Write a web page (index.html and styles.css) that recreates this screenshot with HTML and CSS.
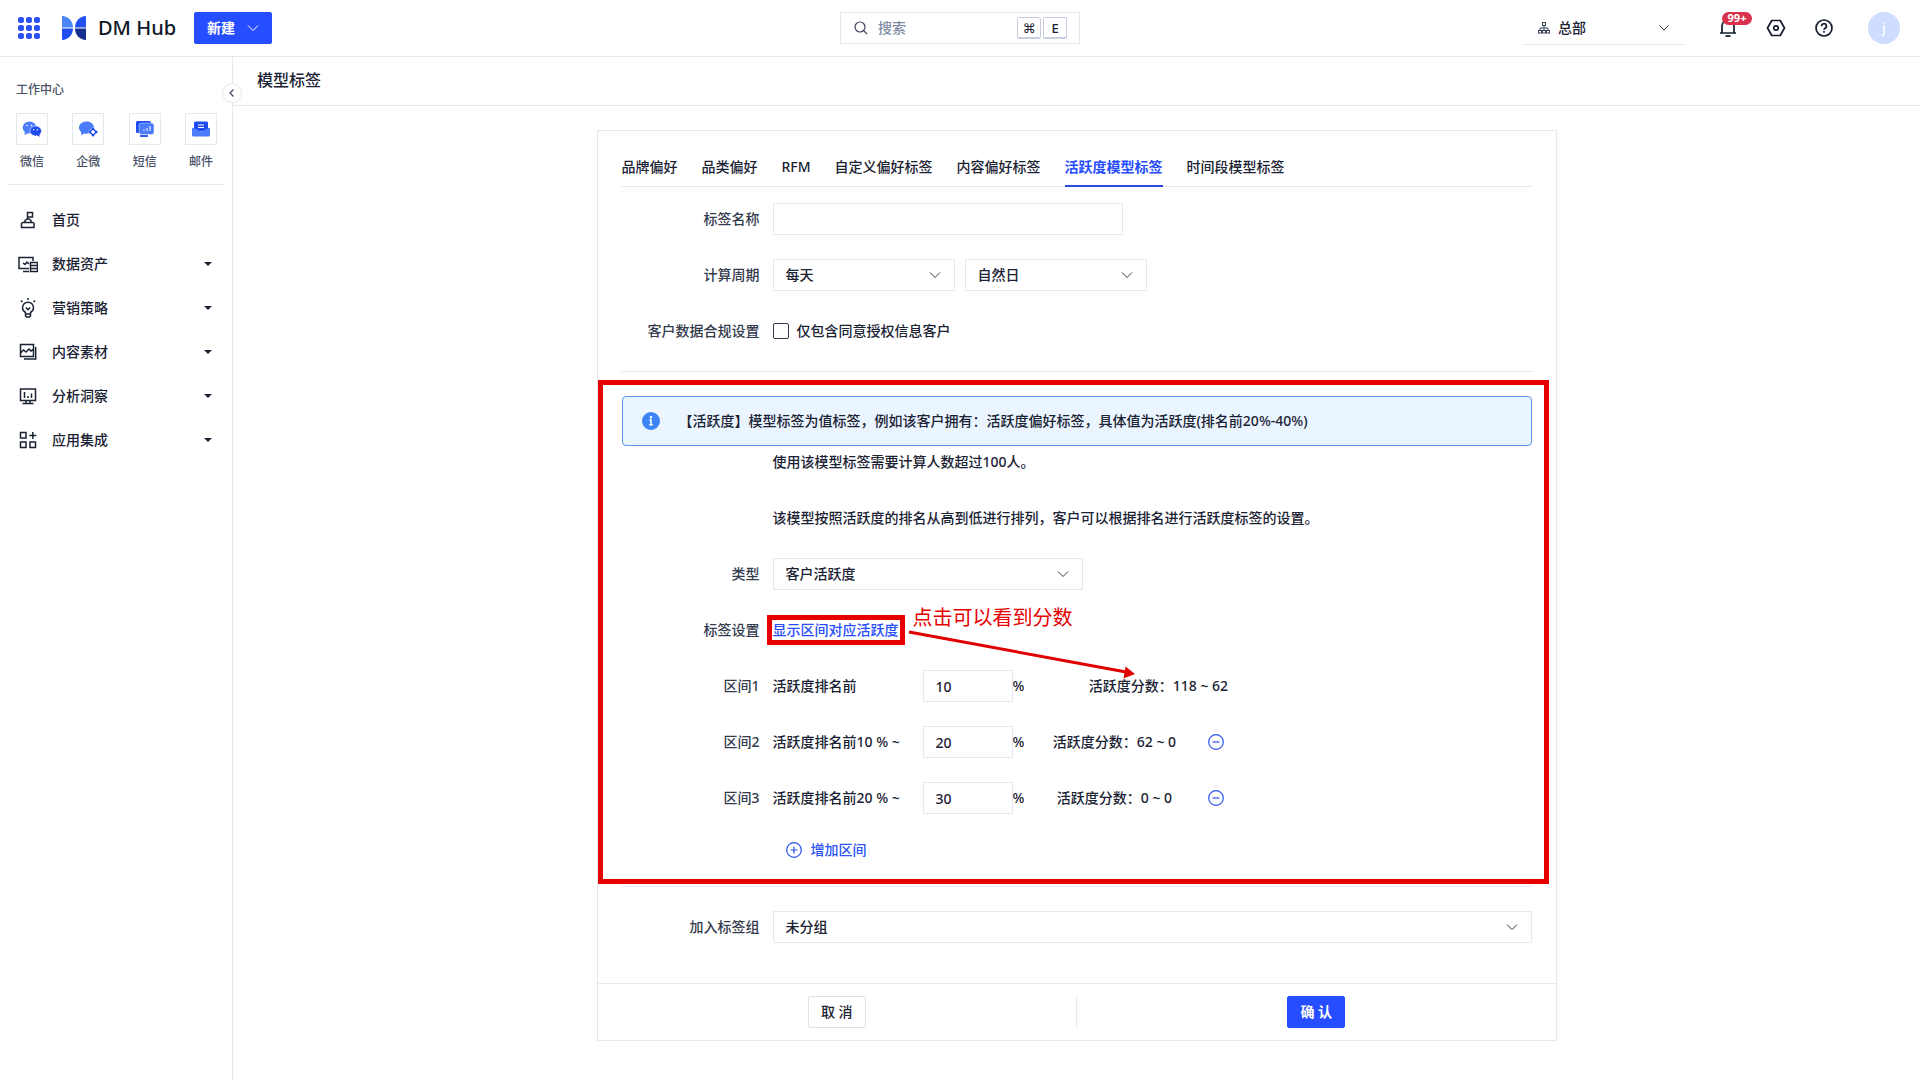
FILE: index.html
```html
<!DOCTYPE html>
<html lang="zh-CN">
<head>
<meta charset="utf-8">
<meta name="viewport" content="width=device-width, initial-scale=1">
<title>模型标签 - DM Hub</title>
<link rel="stylesheet" href="styles.css">
</head>
<body>
<header class="topbar">
  <div class="topbar-left">
    <button class="icon-button" type="button" aria-label="应用">
      <svg width="24" height="24" viewBox="0 0 24 24" fill="#2a52f5"><rect x="1" y="1" width="6" height="6" rx="2"/><rect x="9" y="1" width="6" height="6" rx="2"/><rect x="17" y="1" width="6" height="6" rx="2"/><rect x="1" y="9" width="6" height="6" rx="2"/><rect x="9" y="9" width="6" height="6" rx="2"/><rect x="17" y="9" width="6" height="6" rx="2"/><rect x="1" y="17" width="6" height="6" rx="2"/><rect x="9" y="17" width="6" height="6" rx="2"/><rect x="17" y="17" width="6" height="6" rx="2"/></svg>
    </button>
    <a class="brand" href="#">
      <svg width="26" height="26" viewBox="0 0 26 26"><path d="M1 1c6 0 11 5 11 11.500H1z" fill="#4a86f7"/><path d="M25 1c-6 0-11 5-11 11.500h11z" fill="#2450f0"/><path d="M1 13.500h11C12 20 7 25 1 25z" fill="#1f4df0"/><path d="M25 13.500H14C14 20 19 25 25 25z" fill="#152f8f"/></svg>
      <span>DM Hub</span>
    </a>
    <button class="btn btn-primary btn-new" type="button">新建
      <svg width="12" height="12" viewBox="0 0 12 12" fill="none" stroke="currentColor"><path d="M1 3.500l5 5 5-5"/></svg>
    </button>
  </div>
  <label class="search">
    <svg width="14" height="14" viewBox="0 0 14 14" fill="none" stroke="#3c4458" stroke-width="1.200"><circle cx="6" cy="6" r="5"/><path d="M9.700 9.700L13 13"/></svg>
    <input type="search" placeholder="搜索" aria-label="搜索">
    <kbd>⌘</kbd><kbd>E</kbd>
  </label>
  <div class="topbar-right">
    <div class="org">
      <svg width="12" height="12" viewBox="0 0 12 12" fill="none" stroke="#3c4458"><rect x="4.500" y=".5" width="3" height="3"/><path d="M6 3.500v5M2 8.500V6h8v2.500"/><rect x=".5" y="8.500" width="3" height="2.500"/><rect x="4.500" y="8.500" width="3" height="2.500"/><rect x="8.500" y="8.500" width="3" height="2.500"/></svg>
      <select aria-label="组织"><option>总部</option></select>
      <svg class="chevron" width="12" height="12" viewBox="0 0 12 12" fill="none" stroke="#333b4d"><path d="M1.500 3.500L6 8l4.500-4.500"/></svg>
    </div>
    <div class="tools">
      <button class="icon-button bell" type="button" aria-label="通知">
        <svg width="20" height="20" viewBox="0 0 20 20" fill="none" stroke="#141c2e" stroke-width="1.700"><path d="M4 15V8a6 6 0 0 1 12 0v7M2 15h16M7.500 18.200h5"/></svg>
        <span class="badge">99+</span>
      </button>
      <button class="icon-button" type="button" aria-label="设置">
        <svg width="20" height="20" viewBox="0 0 20 20" fill="none" stroke="#141c2e" stroke-width="1.700" stroke-linejoin="round"><path d="M5.800 2.500h8.400L18.500 10l-4.300 7.500H5.800L1.500 10z"/><circle cx="10" cy="10" r="2.200"/></svg>
      </button>
      <button class="icon-button" type="button" aria-label="帮助">
        <svg width="20" height="20" viewBox="0 0 20 20" fill="none" stroke="#141c2e" stroke-width="1.700"><circle cx="10" cy="10" r="8"/><path d="M7.600 8.200a2.400 2.400 0 1 1 3.600 2c-.9.500-1.200.8-1.200 1.600"/><path d="M10 13v1.700"/></svg>
      </button>
    </div>
    <span class="avatar">j</span>
  </div>
</header>

<div class="layout">
  <aside class="sidebar">
    <button class="collapse" type="button" aria-label="收起">
      <svg width="8" height="10" viewBox="0 0 8 10" fill="none" stroke="#4a5268" stroke-width="1.400"><path d="M5.500 1.500L2 5l3.500 3.500"/></svg>
    </button>
    <h2 class="work-title">工作中心</h2>
    <div class="work-list">
      <a class="work" href="#"><span class="work-icon"><svg width="20" height="18" viewBox="0 0 20 18"><ellipse cx="7.500" cy="7.500" rx="6.800" ry="6" fill="#4a7bfa"/><path d="M3 11l-.5 4 4-2z" fill="#4a7bfa"/><circle cx="5" cy="5.500" r=".8" fill="#fff"/><circle cx="9.500" cy="5.500" r=".8" fill="#fff"/><ellipse cx="13.700" cy="11" rx="5.800" ry="5" fill="#1f4af0" stroke="#fff" stroke-width=".6"/><path d="M15 15l2.500 2v-4z" fill="#1f4af0"/><circle cx="11.700" cy="9.700" r=".7" fill="#fff"/><circle cx="15.300" cy="9.700" r=".7" fill="#fff"/></svg></span>微信</a>
      <a class="work" href="#"><span class="work-icon"><svg width="20" height="18" viewBox="0 0 20 18"><path d="M8.500 1.500c4.300 0 7.500 2.700 7.500 6s-3.200 6.200-7.500 6.200c-.9 0-1.700-.1-2.500-.3L3 15.500l.3-3.300C1.800 11 1 9.400 1 7.500c0-3.300 3.200-6 7.500-6z" fill="#4a7bfa"/><path d="M15 7l5 5-5 5-5-5z" fill="#fff"/><path d="M15 8.700l3.300 3.300-3.300 3.300-3.300-3.300z" fill="none" stroke="#1f4af0" stroke-width="1.500"/><g fill="#1f4af0"><circle cx="15" cy="8.800" r="1.200"/><circle cx="15" cy="15.200" r="1.200"/><circle cx="11.800" cy="12" r="1.200"/><circle cx="18.300" cy="12" r="1.200"/></g></svg></span>企微</a>
      <a class="work" href="#"><span class="work-icon"><svg width="20" height="18" viewBox="0 0 20 18"><rect x="1" y="1" width="15" height="12" rx="1.500" fill="#1f4af0"/><rect x="4" y="3" width="15" height="11.500" rx="2.500" fill="#4a7bfa" stroke="#fff" stroke-width=".4"/><path d="M5 16h8" stroke="#1f4af0" stroke-width="1.800"/><path d="M9 11V9.500M12 11V8M15 11V6" stroke="#fff"/></svg></span>短信</a>
      <a class="work" href="#"><span class="work-icon"><svg width="20" height="18" viewBox="0 0 20 18"><path d="M3 3a1.500 1.500 0 0 1 1.500-1.500h11A1.500 1.500 0 0 1 17 3v8H3z" fill="#1f4af0"/><path d="M7 5h6M7 7.500h6" stroke="#fff" stroke-width="1.100"/><path d="M1 7.500l9 4 9-4V15a1.500 1.500 0 0 1-1.500 1.500h-15A1.500 1.500 0 0 1 1 15z" fill="#4a7bfa"/></svg></span>邮件</a>
    </div>
    <nav class="menu">
      <a href="#"><svg viewBox="0 0 20 20"><path d="M9.500 9V2.500h5v4.500h-5M7 12.500v-2l2-1.500h2l2 1.500v2M3.500 17.500v-4l1-1H15l1 1v4z"/></svg><span>首页</span></a>
      <a href="#"><svg viewBox="0 0 20 20"><path d="M11 14.500H1V3.500h14V7M5 17.500h6M5 9l2 1.500 2-2.500 2 2"/><path d="M12.500 8.500h7v9h-7zM12.500 11.500h7M12.500 14.500h7"/></svg><span>数据资产</span><i class="caret"></i></a>
      <a href="#"><svg viewBox="0 0 20 20"><path d="M7.500 14.500C5.800 13.500 4.500 12 4.500 9.700a5.500 5.500 0 0 1 11 0c0 2.300-1.300 3.800-3 4.800v3.500l-1 1h-3l-1-1zM7.500 16h5M7.800 9.500L10 11.700l2.200-2.200M10 0v2M3 2.500l1.500 1.500M17 2.500L15.500 4"/></svg><span>营销策略</span><i class="caret"></i></a>
      <a href="#"><svg viewBox="0 0 20 20"><path d="M2.500 2.500h13v12h-13zM2.500 11l3-3 2.500 2 3-3 2 2 2.500-1.500M17.700 5v12H6"/></svg><span>内容素材</span><i class="caret"></i></a>
      <a href="#"><svg viewBox="0 0 20 20"><path d="M2.500 3h15v11.500h-15zM4.500 17.500h11M8 14.500v3M12 14.500v3M6.500 6v6M10 10v2M13.500 7.500V12"/></svg><span>分析洞察</span><i class="caret"></i></a>
      <a href="#"><svg viewBox="0 0 20 20"><path d="M2.500 2.500h5.500v5.500H2.500zM2.500 12h5.500v5.500H2.500zM12 12h5.500v5.500H12zM14.800 2v7M11.300 5.500h7"/></svg><span>应用集成</span><i class="caret"></i></a>
    </nav>
  </aside>

  <main class="main">
    <h1 class="page-title">模型标签</h1>
    <form class="card">
      <div class="card-body">
        <nav class="tabs">
          <a href="#">品牌偏好</a><a href="#">品类偏好</a><a href="#">RFM</a><a href="#">自定义偏好标签</a><a href="#">内容偏好标签</a><a class="active" href="#">活跃度模型标签</a><a href="#">时间段模型标签</a>
        </nav>
        <div class="rows">
          <div class="row"><label class="label" for="name">标签名称</label><input class="field w-name" id="name" type="text"></div>
          <div class="row"><label class="label" for="cycle">计算周期</label>
            <div class="pair">
              <div class="select w-cycle"><select class="field" id="cycle"><option>每天</option></select><svg class="chevron" width="12" height="12" viewBox="0 0 12 12"><path d="M1 3.500l5 5 5-5"/></svg></div>
              <div class="select w-cycle"><select class="field" aria-label="日期类型"><option>自然日</option></select><svg class="chevron" width="12" height="12" viewBox="0 0 12 12"><path d="M1 3.500l5 5 5-5"/></svg></div>
            </div>
          </div>
          <div class="row"><span class="label">客户数据合规设置</span><label class="check"><input type="checkbox">仅包含同意授权信息客户</label></div>
        </div>
        <hr>
        <section class="model">
          <div class="alert">
            <svg width="18" height="18" viewBox="0 0 18 18"><circle cx="9" cy="9" r="9" fill="#3d84f7"/><circle cx="9" cy="5.300" r="1.200" fill="#fff"/><path d="M7.500 8H9v4.500M7.200 12.800h3.600" stroke="#fff" stroke-width="1.600" fill="none"/></svg>
            <p>【活跃度】模型标签为值标签，例如该客户拥有：活跃度偏好标签，具体值为活跃度(排名前20%-40%)</p>
          </div>
          <div class="rows">
            <div class="row"><p class="hint">使用该模型标签需要计算人数超过100人。</p></div>
            <div class="row"><p class="hint">该模型按照活跃度的排名从高到低进行排列，客户可以根据排名进行活跃度标签的设置。</p></div>
            <div class="row"><label class="label" for="type">类型</label><div class="select w-type"><select class="field" id="type"><option>客户活跃度</option></select><svg class="chevron" width="12" height="12" viewBox="0 0 12 12"><path d="M1 3.500l5 5 5-5"/></svg></div></div>
            <div class="row"><span class="label">标签设置</span>
              <div class="callout"><a class="show-score" href="#">显示区间对应活跃度</a>
                <span class="note">点击可以看到分数</span>
                <svg class="arrow" width="230" height="52" viewBox="0 0 230 52"><path d="M2 3L219 43" stroke="#e00000" stroke-width="3"/><path d="M228 45l-11.500 4.500 2-12z" fill="#e00000"/></svg>
              </div>
            </div>
            <div class="row"><span class="label">区间1</span><div class="range"><label for="r1">活跃度排名前</label><input class="field" id="r1" type="text" value="10"><span>%</span><span class="score score-wide">活跃度分数：118 ~ 62</span></div></div>
            <div class="row"><span class="label">区间2</span><div class="range"><label for="r2">活跃度排名前10 % ~</label><input class="field" id="r2" type="text" value="20"><span>%</span><span class="score">活跃度分数：62 ~ 0</span><button class="icon-button round" type="button" aria-label="删除区间2"><svg width="16" height="16" viewBox="0 0 16 16"><circle cx="8" cy="8" r="7.300"/><path d="M4.500 8h7"/></svg></button></div></div>
            <div class="row"><span class="label">区间3</span><div class="range"><label for="r3">活跃度排名前20 % ~</label><input class="field" id="r3" type="text" value="30"><span>%</span><span class="score">活跃度分数：0 ~ 0</span><button class="icon-button round" type="button" aria-label="删除区间3"><svg width="16" height="16" viewBox="0 0 16 16"><circle cx="8" cy="8" r="7.300"/><path d="M4.500 8h7"/></svg></button></div></div>
          </div>
          <button class="add round" type="button"><svg width="16" height="16" viewBox="0 0 16 16"><circle cx="8" cy="8" r="7.300"/><path d="M4.500 8h7M8 4.500v7"/></svg>增加区间</button>
        </section>
        <hr>
        <div class="row"><label class="label" for="group">加入标签组</label><div class="select"><select class="field" id="group"><option>未分组</option></select><svg class="chevron" width="12" height="12" viewBox="0 0 12 12"><path d="M1 3.500l5 5 5-5"/></svg></div></div>
      </div>
      <footer class="card-footer">
        <div><button class="btn" type="button">取 消</button></div>
        <div><button class="btn btn-primary" type="submit">确 认</button></div>
      </footer>
    </form>
  </main>
</div>
</body>
</html>
```
FILE: styles.css
```css
:root {
  --blue: #264dff;
  --line: #e6e8f0;
  --text: #1a2233;
  --red: #e60000;
}

* { box-sizing: border-box; }

body {
  margin: 0;
  min-height: 100vh;
  display: flex;
  flex-direction: column;
  background: #fff;
  color: var(--text);
  font: 500 14px/20px "Noto Sans", "Noto Sans CJK SC", sans-serif;
}

a { color: inherit; text-decoration: none; }
p, h1, h2 { margin: 0; }
button, input, select { font: inherit; color: inherit; }
svg { display: block; flex: none; }

.icon-button {
  display: block;
  padding: 0;
  border: 0;
  background: none;
}

.btn {
  height: 32px;
  padding: 0 12px;
  border: 1px solid #dfe2ec;
  border-radius: 2px;
  background: #fff;
}

.btn-primary {
  border-color: var(--blue);
  background: var(--blue);
  color: #fff;
  font-weight: 700;
}

/* Top bar */
.topbar {
  display: grid;
  grid-template-columns: 1fr 240px 1fr;
  align-items: center;
  height: 57px;
  border-bottom: 1px solid var(--line);
}

.topbar-left {
  display: flex;
  align-items: center;
  padding-left: 17px;
}

.brand {
  display: flex;
  align-items: center;
  gap: 11px;
  margin: 0 18px 0 20px;
  font-size: 20px;
  color: #0f1728;
}

.btn-new {
  display: flex;
  align-items: center;
  gap: 12px;
}

.search {
  display: flex;
  align-items: center;
  gap: 2px;
  height: 32px;
  padding: 0 12px 0 13px;
  border: 1px solid var(--line);
}

.search input {
  flex: 1;
  min-width: 0;
  padding: 0 8px;
  border: 0;
  outline: 0;
  background: none;
}

.search input::placeholder { color: #808aa3; }

.search kbd {
  width: 24px;
  height: 22px;
  border: 1px solid #c9cde0;
  border-bottom-width: 2px;
  border-radius: 2px;
  font: 500 13px/20px "Noto Sans", "DejaVu Sans", sans-serif;
  text-align: center;
}

.topbar-right {
  display: flex;
  justify-content: flex-end;
  align-items: center;
  padding-right: 20px;
}

.org {
  position: relative;
  display: flex;
  align-items: center;
  gap: 8px;
  width: 160px;
  height: 33px;
  padding-left: 14px;
  border-bottom: 1px solid var(--line);
}

.org select {
  flex: 1;
  padding: 0;
  border: 0;
  appearance: none;
  background: none;
}

.tools {
  display: flex;
  gap: 28px;
  margin: 0 34px;
}

.bell { position: relative; }

.badge {
  position: absolute;
  top: -6px;
  left: 4px;
  width: 30px;
  height: 13px;
  border-radius: 7px;
  background: #d9304c;
  color: #fff;
  font-size: 11px;
  font-weight: 700;
  line-height: 12px;
}

.avatar {
  width: 32px;
  border-radius: 50%;
  background: #cddcff;
  color: #fff;
  line-height: 32px;
  text-align: center;
}

/* Sidebar */
.layout {
  flex: 1;
  display: flex;
}

.sidebar {
  position: relative;
  flex: none;
  width: 233px;
  padding: 23px 7px 23px 8px;
  border-right: 1px solid var(--line);
}

.collapse {
  position: absolute;
  top: 26px;
  right: -10px;
  display: grid;
  place-items: center;
  width: 20px;
  height: 20px;
  padding: 0;
  border: 1px solid var(--line);
  border-radius: 50%;
  background: #fff;
}

.work-title {
  margin: 0 8px 13px;
  color: #4a5268;
  font-size: 12px;
  font-weight: 500;
}

.work-list {
  display: flex;
  justify-content: space-between;
  padding: 0 8px 12px;
  border-bottom: 1px solid var(--line);
}

.work {
  display: flex;
  flex-direction: column;
  align-items: center;
  gap: 7px;
  width: 32px;
  color: #4a5268;
  font-size: 12px;
}

.work-icon {
  display: grid;
  place-items: center;
  width: 32px;
  height: 32px;
  border: 1px solid var(--line);
}

.menu { padding-top: 13px; }

.menu a {
  display: flex;
  align-items: center;
  gap: 14px;
  height: 44px;
  padding: 0 13px 0 10px;
}

.menu svg {
  width: 20px;
  height: 20px;
  fill: none;
  stroke: var(--text);
  stroke-width: 1.5;
}

.menu span { flex: 1; }

.caret {
  border: 4px solid transparent;
  border-top-color: var(--text);
  border-bottom: 0;
}

/* Main */
.main {
  flex: 1;
  min-width: 0;
}

.page-title {
  height: 49px;
  padding-left: 24px;
  border-bottom: 1px solid var(--line);
  font-size: 16px;
  font-weight: 500;
  line-height: 46px;
}

.card {
  max-width: 960px;
  margin: 24px auto 40px;
  border: 1px solid var(--line);
}

.card-body { padding: 24px 24px 40px; }

.tabs {
  display: flex;
  gap: 24px;
  margin-bottom: 16px;
  box-shadow: inset 0 -1px var(--line);
}

.tabs a {
  height: 32px;
  line-height: 24px;
}

.tabs .active {
  border-bottom: 2px solid #2a4be0;
  color: var(--blue);
  font-weight: 700;
}

.card hr {
  height: 1px;
  margin: 24px 0;
  border: 0;
  background: var(--line);
}

.rows {
  display: grid;
  gap: 24px;
}

.row {
  display: grid;
  grid-template-columns: 138px 1fr;
  column-gap: 13px;
  align-items: center;
  min-height: 32px;
}

.label {
  color: #333b4d;
  text-align: right;
}

.hint { grid-column: 2; }

.field {
  width: 100%;
  height: 32px;
  padding: 0 12px;
  border: 1px solid var(--line);
  border-radius: 1px;
  background: #fff;
  appearance: none;
}

.w-name { max-width: 350px; }
.w-cycle { width: 182px; }
.w-type { max-width: 310px; }

.pair {
  display: flex;
  gap: 10px;
}

.select { position: relative; }

.chevron {
  position: absolute;
  top: 10px;
  right: 14px;
  fill: none;
  stroke: #333b4d;
  pointer-events: none;
}

.check {
  display: flex;
  align-items: center;
  gap: 8px;
}

.check input {
  width: 16px;
  height: 16px;
  margin: 0;
  border: 1px solid #333b4d;
  border-radius: 2px;
  appearance: none;
}

.alert {
  display: flex;
  align-items: center;
  gap: 19px;
  min-height: 50px;
  padding: 0 19px;
  border: 1px solid #5c93e6;
  border-radius: 4px;
  background: #eaf5ff;
}

.range {
  display: flex;
  align-items: center;
}

.range label { width: 150px; }
.range .field { width: 90px; }

.score {
  width: 180px;
  text-align: center;
}

.score-wide { width: 268px; }

.score + .round { margin-left: 4px; }

.round { color: #2a52f5; }

.round svg {
  fill: none;
  stroke: currentColor;
  stroke-width: 1.2;
}

.add {
  display: flex;
  align-items: center;
  gap: 9px;
  height: 32px;
  margin: 20px 0 -4px 151px;
  padding: 0 13px;
  border: 0;
  background: none;
}

/* Red markup over the form */
.model { position: relative; }

.model::after {
  content: "";
  position: absolute;
  inset: -16px -17px -18px -24px;
  border: 5px solid var(--red);
  pointer-events: none;
}

.callout {
  position: relative;
  justify-self: start;
  line-height: 18px;
}

.show-score {
  display: block;
  outline: 5px solid var(--red);
  outline-offset: 1px;
  color: var(--blue);
}

.note {
  position: absolute;
  left: 140px;
  bottom: 9px;
  color: var(--red);
  font-size: 20px;
  font-weight: 400;
  line-height: 24px;
  white-space: nowrap;
}

.arrow {
  position: absolute;
  top: 8px;
  left: 134px;
}

/* Footer */
.card-footer {
  display: flex;
  padding: 12px 0;
  border-top: 1px solid var(--line);
}

.card-footer div {
  flex: 1;
  text-align: center;
}

.card-footer div + div { border-left: 1px solid var(--line); }
```
